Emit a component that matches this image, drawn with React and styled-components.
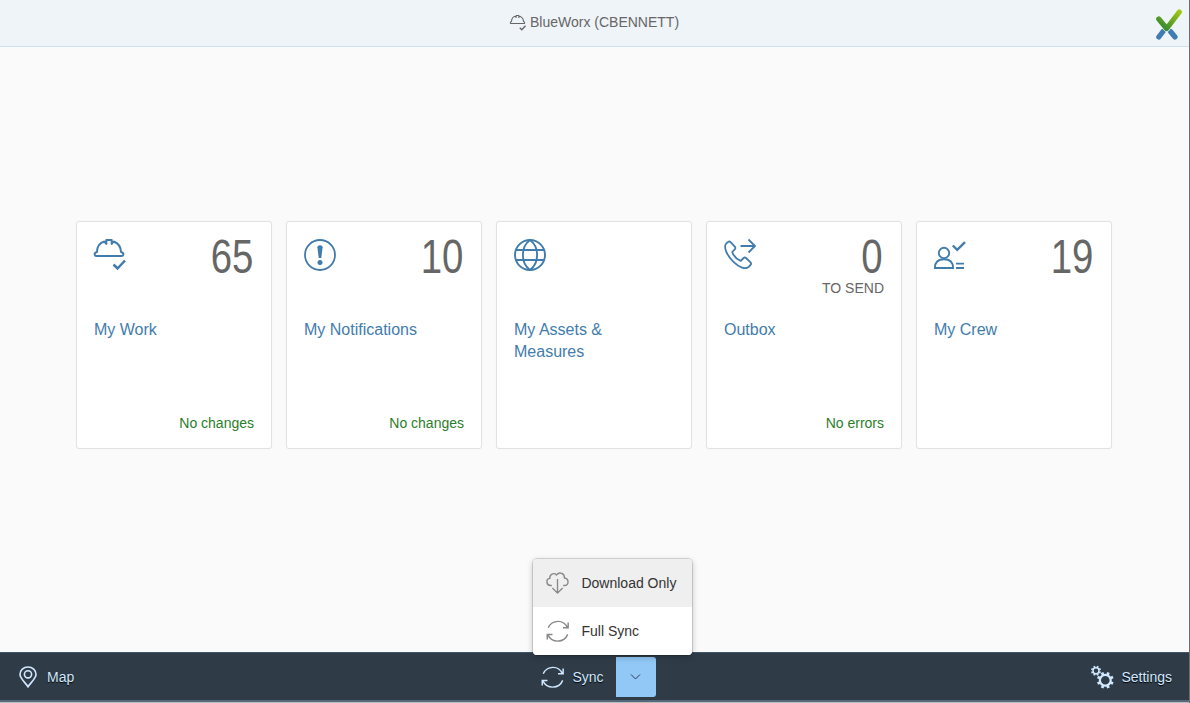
import React from "react";
import styled, { createGlobalStyle } from "styled-components";

const GlobalStyle = createGlobalStyle`
  * { box-sizing: border-box; }
  body { margin: 0; overflow: hidden; font-family: "Liberation Sans", Arial, sans-serif; font-size: 14px; }
`;

const Shell = styled.div`
  display: flex;
  flex-direction: column;
  width: 1190px;
  height: 703px;
  background: #fafafa;
  border-right: 1px solid #6b6e72;
`;

const Header = styled.header`
  display: grid;
  grid-template-columns: 1fr auto 1fr;
  align-items: center;
  height: 47px;
  flex: none;
  background: #eff4f8;
  border-bottom: 1px solid #cfe0ee;
`;

const Title = styled.div`
  display: flex;
  align-items: center;
  grid-column: 2;
  gap: 4px;
  height: 16px;
  margin-bottom: 2px;
  color: #666;
  line-height: 16px;

  svg { margin-top: 2px; }
`;

const LogoSlot = styled.div`
  justify-self: end;
  height: 32px;
  margin: 1px 7px 0 0;
`;

const Main = styled.main`
  flex: 1;
  display: flex;
  justify-content: flex-start;
  align-items: flex-start;
  gap: 14px;
  padding: 174px 0 0 76px;
`;

const Tile = styled.article`
  display: flex;
  flex-direction: column;
  width: 196px;
  height: 228px;
  padding: 17px;
  background: #fff;
  border: 1px solid #e2e2e2;
  border-radius: 3px;
  box-shadow: 0 0 2px rgba(0, 0, 0, 0.04);
  color: #427cac;
`;

const TileTop = styled.div`
  display: flex;
  justify-content: space-between;
  align-items: flex-start;
  height: 80px;
`;

const Numeric = styled.div`
  display: flex;
  flex-direction: column;
  align-items: flex-end;
  color: #666;
`;

const Value = styled.div`
  margin-right: 1px;
  font-size: 48px;
  line-height: 36px;
  transform: scaleX(0.8);
  transform-origin: right;
`;

const Unit = styled.div`
  line-height: 16px;
  margin-top: 5px;
`;

const TileTitle = styled.div`
  font-size: 16px;
  line-height: 22px;
`;

const Status = styled.div`
  margin-top: auto;
  align-self: flex-end;
  line-height: 16px;
  color: #2b7d2b;
`;

const Footer = styled.footer`
  display: grid;
  grid-template-columns: 1fr auto 1fr;
  height: 51px;
  flex: none;
  padding-bottom: 1px;
  background: #2f3c48;
  border-top: 1px solid #41566a;
  border-bottom: 1px solid #b9bcbf;
  box-shadow: inset 0 -2px #56697b;
  color: #d1e8ff;
`;

const FooterButton = styled.button`
  display: flex;
  align-items: center;
  justify-self: ${(p) => p.$side};
  gap: ${(p) => p.$gap || 7}px;
  height: 48px;
  padding: ${(p) => p.$pad};
  border: 0;
  background: transparent;
  color: inherit;
  font: inherit;
  line-height: 16px;
  text-shadow: 0 1px 1px #000;
`;

const SyncGroup = styled.div`
  position: relative;
  display: flex;
  align-items: center;
`;

const ArrowButton = styled.button`
  display: flex;
  align-items: center;
  justify-content: center;
  width: 40px;
  height: 40px;
  padding: 0 1px 0 0;
  border: 0;
  border-radius: 0 3px 3px 0;
  background: #91c8f6;
  color: #33375c;
`;

const Menu = styled.div`
  position: absolute;
  left: 0;
  bottom: 46px;
  width: 159px;
  overflow: hidden;
  border-radius: 4px;
  background: #fff;
  box-shadow: 0 0 0 1px rgba(0, 0, 0, 0.12), 0 2px 6px rgba(0, 0, 0, 0.25);
`;

const MenuItem = styled.div`
  display: flex;
  align-items: center;
  gap: 11px;
  height: 48px;
  padding-left: 13px;
  background: ${(p) => (p.$active ? "#efefef" : "#fff")};
  color: #333;
  white-space: nowrap;

  svg { color: #888; }
`;

const Svg = styled.svg.attrs({ fill: "none", stroke: "currentColor" })`
  display: block;
  flex: none;
  overflow: visible;
`;

const Helmet = ({ size = 32, weight = 2 }) => (
  <Svg width={size} height={size} viewBox="0 0 32 32" strokeWidth={weight} strokeLinejoin="round">
    <path d="M3 13C3.2 6.8 6.6 3.5 10.3 2.5L12.3 5V1H17.7V5L19.7 2.5C23.8 4 26.7 7 27 13C29 13.5 29.5 14.4 29.3 15.6Q29.1 17 27.8 17H2.2Q.9 17 .7 15.6C.5 14.4 1 13.5 3 13Z" />
    <path d="M19.5 25.5L23.5 29.5L31 21.5" strokeWidth={weight * 1.25} strokeLinejoin="miter" />
  </Svg>
);

const Alert = () => (
  <Svg width="32" height="32" viewBox="0 0 32 32" strokeWidth="1.8">
    <circle cx="16" cy="16" r="15" />
    <path d="M13.4 8.2Q13.4 6.2 16 6.2T18.6 8.2L17.3 19H14.7Z" fill="currentColor" stroke="none" />
    <circle cx="16" cy="23.5" r="2.5" fill="currentColor" stroke="none" />
  </Svg>
);

const Globe = () => (
  <Svg width="32" height="32" viewBox="0 0 32 32" strokeWidth="1.9">
    <circle cx="16" cy="16" r="15" />
    <path d="M16 1C6.5 8 6.5 24 16 31C25.5 24 25.5 8 16 1ZM2 11H30M2 21H30" />
  </Svg>
);

const OutgoingCall = () => (
  <Svg width="32" height="32" viewBox="0 0 32 32" strokeWidth="1.8" strokeLinejoin="round">
    <path d="M2.2 4.5L4.1 2.9Q5.5 2 6.8 3.3L10.8 7.6Q11.9 9 10.8 10.3L8.2 13C9.5 16.8 13 20.3 16.8 21.8L19.6 19Q20.9 18 22.1 19L26.5 23.3Q27.7 24.7 26.5 26L24.7 27.8C21.7 30.6 15.3 28.8 9.2 22.7C3.1 16.5-.9 8 2.2 4.5Z" />
    <path d="M16.5 7H30.5M24.5.5L31 7L24.5 13.5" strokeLinejoin="miter" />
  </Svg>
);

const Crew = () => (
  <Svg width="32" height="32" viewBox="0 0 32 32" strokeWidth="1.9">
    <circle cx="10" cy="14" r="5.2" />
    <path d="M.9 29C.9 23.5 4.2 20.3 10 20.3S19.1 23.5 19.1 29ZM22 24.6H30M22 29H30" />
    <path d="M18.8 6.5L23.2 10.9L31 3.2" strokeWidth="2.4" />
  </Svg>
);

const Refresh = () => (
  <Svg width="24" height="24" viewBox="-0.1 -0.9 24.8 24.8" strokeWidth="1.5">
    <path d="M2.2 8.1C6.3-.5 18.2-.8 22 8.1M22.8 2.8V8.2H17.5M22.3 15C18.5 24.2 6 24.2 1.8 15.5M1.2 20.4V15.1H6.6" />
  </Svg>
);

const CloudDownload = () => (
  <Svg width="24" height="24" viewBox="0.2 -0.4 24.6 24.6" strokeWidth="1.4">
    <path d="M6.2 14.5H4.8C.4 14.2-.3 7.8 4.1 7.2C3.6 3.3 8.2.8 11 3.6C14-.1 19.5 2.2 19.1 6.8C24 7.4 24 14.2 19 14.5H17.8M12 7.8V22M6.8 17L12 22.3L17.2 17" />
  </Svg>
);

const Pin = () => (
  <Svg width="18" height="22" viewBox="0 0 18 22" strokeWidth="1.6">
    <path d="M9 20.8C6.7 17 1 12.5 1 8.5C1 4 4.5 1 9 1S17 4 17 8.5C17 12.5 11.3 17 9 20.8Z" />
    <circle cx="9" cy="8.3" r="3.6" />
  </Svg>
);

const Gear = ({ cx, cy, r, teeth, weight }) => (
  <g>
    <circle cx={cx} cy={cy} r={r} strokeWidth={weight} />
    {Array.from({ length: teeth }, (_, i) => (
      <path
        key={i}
        d={`M${cx} ${cy - r - 0.4}V${cy - r - weight * 1.35}`}
        strokeWidth={weight * 1.25}
        transform={`rotate(${((i + 0.5) * 360) / teeth} ${cx} ${cy})`}
      />
    ))}
  </g>
);

const Settings = () => (
  <Svg width="24" height="24" viewBox="0 0 24 24">
    <Gear cx={6} cy={5.8} r={3} teeth={8} weight={1.5} />
    <Gear cx={15.3} cy={15.3} r={5.4} teeth={8} weight={2.2} />
  </Svg>
);

const Chevron = () => (
  <Svg width="9" height="6" viewBox="0 0 9 6" strokeWidth="1">
    <path d="M0 .5L4.5 5L9 .5" />
  </Svg>
);

const Logo = () => (
  <Svg width="28" height="32" viewBox="0 0 28 32" strokeLinecap="round" strokeLinejoin="round">
    <defs>
      <linearGradient id="leaf" x1="10" y1="24" x2="25" y2="2" gradientUnits="userSpaceOnUse">
        <stop stopColor="#2c8432" />
        <stop offset="1" stopColor="#a5c913" />
      </linearGradient>
    </defs>
    <path d="M9 23.5L4.8 29M16.5 23.5L21 29" stroke="#3f7db2" strokeWidth="5.2" />
    <path d="M4.8 11L12.7 20.5L25.3 4" stroke="#eff4f8" strokeWidth="6.6" />
    <path d="M4.8 11L12.7 20.5L25.3 4" stroke="url(#leaf)" strokeWidth="5.2" />
  </Svg>
);

const tiles = [
  { title: "My Work", icon: <Helmet />, value: 65, status: "No changes" },
  { title: "My Notifications", icon: <Alert />, value: 10, status: "No changes" },
  { title: "My Assets & Measures", icon: <Globe /> },
  { title: "Outbox", icon: <OutgoingCall />, value: 0, unit: "TO SEND", status: "No errors" },
  { title: "My Crew", icon: <Crew />, value: 19 },
];

export default function App() {
  return (
    <Shell>
      <GlobalStyle />
      <Header>
        <Title><Helmet size={16} weight={2.2} />BlueWorx (CBENNETT)</Title>
        <LogoSlot><Logo /></LogoSlot>
      </Header>
      <Main>
        {tiles.map((t) => (
          <Tile key={t.title}>
            <TileTop>
              {t.icon}
              <Numeric>
                {t.value !== undefined && <Value>{t.value}</Value>}
                {t.unit && <Unit>{t.unit}</Unit>}
              </Numeric>
            </TileTop>
            <TileTitle>{t.title}</TileTitle>
            {t.status && <Status>{t.status}</Status>}
          </Tile>
        ))}
      </Main>
      <Footer>
        <FooterButton $side="start" $gap={10} $pad="0 0 0 19px"><Pin />Map</FooterButton>
        <SyncGroup>
          <FooterButton $pad="0 12px 0 8px"><Refresh />Sync</FooterButton>
          <ArrowButton aria-label="Sync options"><Chevron /></ArrowButton>
          <Menu>
            <MenuItem $active><CloudDownload />Download Only</MenuItem>
            <MenuItem><Refresh />Full Sync</MenuItem>
          </Menu>
        </SyncGroup>
        <FooterButton $side="end" $pad="0 17px 0 0"><Settings />Settings</FooterButton>
      </Footer>
    </Shell>
  );
}
